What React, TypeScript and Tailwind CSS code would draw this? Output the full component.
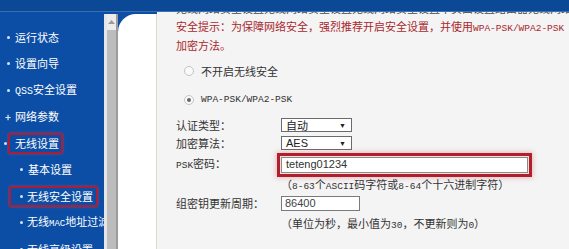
const cjk = "font-['Noto_Sans_CJK_SC','Noto_Sans',sans-serif]";
const mono = "font-['Liberation_Mono',monospace] text-[9.5px]";
const arial = "font-['Liberation_Sans',Arial,sans-serif]";

function Dot() {
  return <span className="h-[3px] w-[3px] shrink-0 rounded-full bg-[#d6e4f6]" />;
}

function SideItem({ children, className = "" }: { children: React.ReactNode; className?: string }) {
  return <div className={`flex h-[26.5px] items-center whitespace-nowrap ${className}`}>{children}</div>;
}

function Sidebar() {
  return (
    <div className={`w-[104px] shrink-0 overflow-hidden pt-[11.75px] text-[11px] text-white ${cjk}`}>
      <SideItem className="pl-[7px]">
        <Dot />
        <span className="ml-[5px]">运行状态</span>
      </SideItem>
      <SideItem className="pl-[7px]">
        <Dot />
        <span className="ml-[5px]">设置向导</span>
      </SideItem>
      <SideItem className="pl-[7px]">
        <Dot />
        <span className="ml-[5px]">
          <span className="font-['Liberation_Mono',monospace] text-[10px]">QSS</span>安全设置
        </span>
      </SideItem>
      <SideItem className="pl-[5px]">
        <span className="w-[7px] text-[10px] font-bold leading-none text-[#d6e4f6]">+</span>
        <span className="ml-[3px]">网络参数</span>
      </SideItem>
      <SideItem className="pl-[4px]">
        <Dot />
        <div className="ml-[1px] flex h-[21px] items-center rounded-[2px] border-2 border-[#a81f3a] pl-[5px] pr-[2px] shadow-[0_0_2px_#c0405a]">
          无线设置
        </div>
      </SideItem>
      <SideItem className="pl-[20px]">
        <Dot />
        <span className="ml-[5px]">基本设置</span>
      </SideItem>
      <SideItem className="pl-[9px]">
        <div className="flex h-[21px] items-center rounded-[2px] border-2 border-[#a81f3a] pl-[9px] pr-[3px] shadow-[0_0_2px_#c0405a]">
          <Dot />
          <span className="ml-[4px]">无线安全设置</span>
        </div>
      </SideItem>
      <SideItem className="pl-[20px]">
        <Dot />
        <span className="ml-[4px]">
          无线<span className="font-['Liberation_Mono',monospace] text-[9px]">MAC</span>地址过滤
        </span>
      </SideItem>
      <SideItem className="pl-[20px]">
        <Dot />
        <span className="ml-[4px]">无线高级设置</span>
      </SideItem>
    </div>
  );
}

function Scrollbar() {
  return (
    <div className="mt-[2px] flex w-[14px] shrink-0">
      <div className="w-[3px] bg-[#e6e6e6]" />
      <div className="flex w-[9px] flex-col bg-[#bcbcbc]">
        <div className="flex h-[16px] items-center justify-center bg-[#ececec]">
          <svg width="7" height="4" viewBox="0 0 7 4">
            <path d="M0 4 L3.5 0 L7 4 Z" fill="#9a9a9a" />
          </svg>
        </div>
      </div>
      <div className="w-[2px] bg-[#9c9c9c]" />
    </div>
  );
}

function Radio({ checked }: { checked?: boolean }) {
  return (
    <span className="flex h-[10px] w-[10px] shrink-0 items-center justify-center rounded-full border border-[#c4c4c4] bg-[#fafafa]">
      {checked && <span className="h-[4px] w-[4px] rounded-full bg-[#666]" />}
    </span>
  );
}

function Select({ value }: { value: string }) {
  return (
    <div className={`flex h-[14px] w-[71px] items-center justify-between border border-[#6b6b6b] bg-white pl-[4px] pr-[5px] text-[11px] leading-none text-[#222] ${arial}`}>
      <span className={value === "自动" ? cjk : ""}>{value}</span>
      <span className="text-[7px]">▼</span>
    </div>
  );
}

function Main() {
  return (
    <div className={`flex-1 overflow-hidden bg-[#f4f4f4] pl-[19px] text-[11px] text-[#333] ${cjk}`}>
      <div className="h-[4px] overflow-hidden">
        <div className="-mt-[11px] whitespace-nowrap leading-[14px] text-[#4a4a4a]">
          无线网络安全设置无线网络安全设置无线网络安全设置本页面设置路由器无线网络的安全认证选项
        </div>
      </div>
      <div className="mt-[1.5px] leading-[17px] text-[#a8282e]">
        <div className="whitespace-nowrap">
          安全提示：为保障网络安全，强烈推荐开启安全设置，并使用<span className={mono}>WPA-PSK/WPA2-PSK AES</span>
        </div>
        <div>加密方法。</div>
      </div>
      <div className="mt-[7.5px] flex h-[20px] items-center pl-[8px]">
        <Radio />
        <span className="ml-[7px]">不开启无线安全</span>
      </div>
      <div className="mt-[9px] flex h-[20px] items-center pl-[8px]">
        <Radio checked />
        <span className={`ml-[7px] ${mono}`}>WPA-PSK/WPA2-PSK</span>
      </div>
      <div className="mt-[6px] grid grid-cols-[105px_1fr]">
        <div className="flex h-[18px] items-center">认证类型：</div>
        <div className="flex h-[18px] items-center">
          <Select value="自动" />
        </div>
        <div className="flex h-[18px] items-center">加密算法：</div>
        <div className="flex h-[18px] items-center">
          <Select value="AES" />
        </div>
        <div className="flex h-[25px] items-center">
          <span>
            <span className={mono}>PSK</span>密码：
          </span>
        </div>
        <div className="flex h-[25px] items-center">
          <div className={`flex h-[16px] w-[247px] items-center border border-[#8a8a8a] bg-white pl-[4px] text-[11px] text-[#333] shadow-[0_0_0_1px_#f6dede,0_0_0_4px_#b11f2c,0_0_5px_5px_rgba(200,60,60,0.3)] ${arial}`}>
            teteng01234
          </div>
        </div>
        <div />
        <div className="flex h-[16px] items-center whitespace-nowrap">
          <span>
            （<span className={mono}>8-63</span>个<span className={mono}>ASCII</span>码字符或<span className={mono}>8-64</span>个十六进制字符）
          </span>
        </div>
        <div className="flex h-[20px] items-center">组密钥更新周期：</div>
        <div className="flex h-[20px] items-center">
          <div className={`flex h-[15px] w-[79px] items-center border border-[#7a7a7a] bg-white pl-[3px] text-[11px] text-[#444] ${arial}`}>
            86400
          </div>
        </div>
        <div />
        <div className="flex h-[22px] items-center whitespace-nowrap">
          <span>
            （单位为秒，最小值为<span className={mono}>30</span>，不更新则为<span className={mono}>0</span>）
          </span>
        </div>
      </div>
    </div>
  );
}

export default function App() {
  return (
    <div className="flex h-[249px] w-[569px] flex-col overflow-hidden bg-[#0c4ea5]">
      <div className="h-[12px] shrink-0 border-b border-[#3a6fb4] bg-[#0b4896]" />
      <div className="flex min-h-0 flex-1">
        <Sidebar />
        <Scrollbar />
        <div className="mt-[2px] w-[39px] shrink-0 rounded-tl-[18px] border-r border-[#d9d9cf] bg-white" />
        <Main />
      </div>
    </div>
  );
}
